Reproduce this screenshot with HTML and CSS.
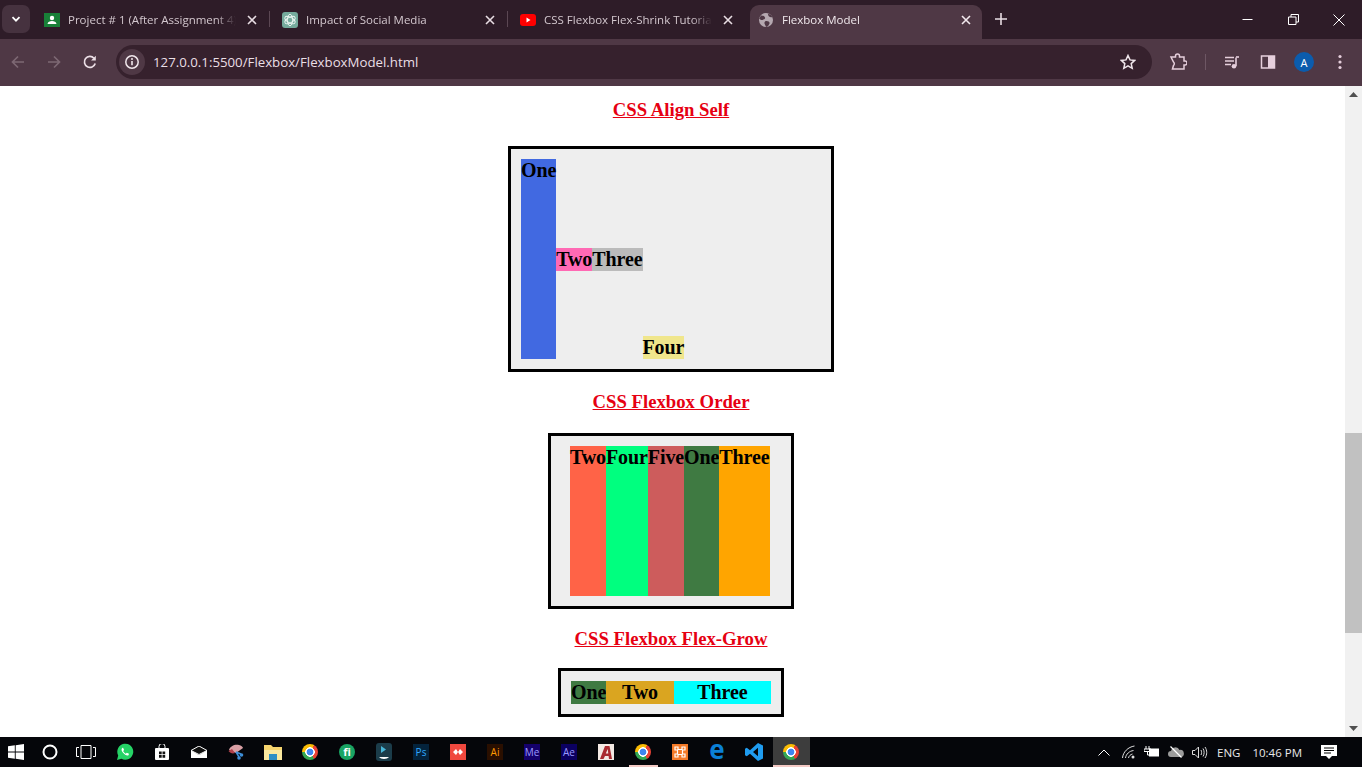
FILE: index.html
```html
<!DOCTYPE html>
<html lang="en">
<head>
<meta charset="utf-8">
<title>Flexbox Model</title>
<link rel="stylesheet" href="styles.css">
</head>
<body>
<div class="tabstrip">
  <div class="tab-search"><svg width="12" height="12" viewBox="0 0 12 12"><path d="M2.5 4.2 6 7.7l3.5-3.5" fill="none" stroke="#fff" stroke-width="1.8"/></svg></div>
  <div class="tab">
    <svg class="fav" width="16" height="16" viewBox="0 0 16 16"><rect y="1" width="16" height="14" fill="#188038"/><circle cx="8" cy="6" r="2.2" fill="#fff"/><path d="M3.5 12c.4-2.2 2.2-3 4.500-3s4.100.8 4.500 3z" fill="#fff"/></svg>
    <span class="tab-title">Project # 1 (After Assignment 4)</span>
    <svg class="tab-x" width="10" height="10" viewBox="0 0 10 10"><path d="M1 1l8 8M9 1 1 9" stroke="#e8dde3" stroke-width="1.600"/></svg>
    <i class="tab-sep"></i>
  </div>
  <div class="tab">
    <svg class="fav" width="16" height="16" viewBox="0 0 16 16"><rect width="16" height="16" rx="3" fill="#74aa9c"/><g fill="none" stroke="#eef7f4" stroke-width=".9"><ellipse cx="8" cy="8" rx="2.700" ry="5.700"/><ellipse cx="8" cy="8" rx="2.700" ry="5.700" transform="rotate(60 8 8)"/><ellipse cx="8" cy="8" rx="2.700" ry="5.700" transform="rotate(120 8 8)"/></g></svg>
    <span class="tab-title">Impact of Social Media</span>
    <svg class="tab-x" width="10" height="10" viewBox="0 0 10 10"><path d="M1 1l8 8M9 1 1 9" stroke="#e8dde3" stroke-width="1.600"/></svg>
    <i class="tab-sep"></i>
  </div>
  <div class="tab">
    <svg class="fav" width="16" height="16" viewBox="0 0 16 16"><rect y="2" width="16" height="12" rx="3" fill="#f00"/><path d="M6.500 5.500v5L10.500 8z" fill="#fff"/></svg>
    <span class="tab-title">CSS Flexbox Flex-Shrink Tutorial</span>
    <svg class="tab-x" width="10" height="10" viewBox="0 0 10 10"><path d="M1 1l8 8M9 1 1 9" stroke="#e8dde3" stroke-width="1.600"/></svg>
  </div>
  <div class="tab tab-active">
    <svg class="fav" width="16" height="16" viewBox="0 0 16 16"><circle cx="8" cy="8" r="7" fill="#b5a8b0"/><path d="M3 3.500c2 0 3.500.5 4 2s-1 2-2.500 2.500S2 7 1.200 6.500zM8.500 9c2 0 3.500 1 3 2.500S10 14.500 8 15c-.5-2-2-3-1.500-4.500S7.500 9 8.500 9zM10 1.500c0 1.500.5 3 2 3.500s2 0 2.800.5A7 7 0 0 0 10 1.500z" fill="#4f3845"/></svg>
    <span class="tab-title">Flexbox Model</span>
    <svg class="tab-x" width="10" height="10" viewBox="0 0 10 10"><path d="M1 1l8 8M9 1 1 9" stroke="#f3e9ee" stroke-width="1.600"/></svg>
  </div>
  <svg class="new-tab" width="12" height="12" viewBox="0 0 12 12"><path d="M6 0v12M0 6h12" stroke="#e8dde3" stroke-width="1.600"/></svg>
  <div class="win-controls">
    <span class="win-btn"><svg width="11" height="11" viewBox="0 0 11 11"><path d="M.5 5.500h10" stroke="#fff"/></svg></span>
    <span class="win-btn"><svg width="11" height="11" viewBox="0 0 11 11"><path d="M.5 3h7.500v7.500H.5zM3 3V.5h7.500V8H8" fill="none" stroke="#fff"/></svg></span>
    <span class="win-btn"><svg width="12" height="12" viewBox="0 0 12 12"><path d="M.5.500l11 11M11.500.5l-11 11" stroke="#fff"/></svg></span>
  </div>
</div>

<div class="toolbar">
  <span class="tool"><svg width="16" height="16" viewBox="0 0 16 16"><path d="M14 8H2.500M8 2.500 2.500 8 8 13.500" fill="none" stroke="#7d6873" stroke-width="1.700"/></svg></span>
  <span class="tool"><svg width="16" height="16" viewBox="0 0 16 16"><path d="M2 8h11.500M8 2.500 13.500 8 8 13.500" fill="none" stroke="#7d6873" stroke-width="1.700"/></svg></span>
  <span class="tool"><svg width="16" height="16" viewBox="0 0 16 16"><path d="M13.200 9.500A5.500 5.500 0 1 1 12 4.200" fill="none" stroke="#ecdfe6" stroke-width="1.700"/><path d="M13.800 1.800v4.700H9.100z" fill="#ecdfe6"/></svg></span>
  <div class="omnibox">
    <span class="site-info"><svg width="16" height="16" viewBox="0 0 16 16"><circle cx="8" cy="8" r="6.200" fill="none" stroke="#f0e6eb" stroke-width="1.500"/><path d="M8 7v4.300" stroke="#f0e6eb" stroke-width="1.600"/><circle cx="8" cy="5" r="1" fill="#f0e6eb"/></svg></span>
    <span class="url">127.0.0.1:5500/Flexbox/FlexboxModel.html</span>
    <svg class="star" width="16" height="16" viewBox="0 0 16 16"><path d="M8 1.500l2 4.400 4.700.5-3.500 3.200 1 4.700L8 11.900l-4.200 2.400 1-4.700-3.500-3.200 4.700-.5z" fill="none" stroke="#f0e6eb" stroke-width="1.500"/></svg>
  </div>
  <span class="tool"><svg width="18" height="18" viewBox="0 0 18 18"><path d="M2 4h4.500V3a2 2 0 0 1 4 0v1H15v4h1a2 2 0 0 1 0 4h-1v4H3.500l1-3.500a2.300 2.300 0 0 0 0-3.500z" fill="none" stroke="#e6cfdc" stroke-width="1.500"/></svg></span>
  <i class="tool-sep"></i>
  <span class="tool"><svg width="16" height="16" viewBox="0 0 16 16"><path d="M1 3.500h9M1 7h9M1 10.500h6" stroke="#e6cfdc" stroke-width="1.500"/><path d="M12 3.500V12" stroke="#e6cfdc" stroke-width="1.600"/><path d="M12 3h3" stroke="#e6cfdc" stroke-width="1.600"/><circle cx="10" cy="12.300" r="2.300" fill="#e6cfdc"/></svg></span>
  <span class="tool"><svg width="16" height="16" viewBox="0 0 16 16"><rect x="1.500" y="2" width="13" height="12" fill="#4f3845" stroke="#e6cfdc" stroke-width="1.500"/><rect x="8" y="2" width="7" height="12" fill="#e6cfdc"/></svg></span>
  <span class="tool"><span class="avatar">A</span></span>
  <span class="tool"><svg width="4" height="16" viewBox="0 0 4 16"><circle cx="2" cy="2.500" r="1.600" fill="#e6cfdc"/><circle cx="2" cy="8" r="1.600" fill="#e6cfdc"/><circle cx="2" cy="13.500" r="1.600" fill="#e6cfdc"/></svg></span>
</div>

<div class="viewport">
  <main class="page">
    <h3 class="heading heading-first">CSS Align Self</h3>
    <div class="flexbox box-align">
      <div class="item royal self-stretch">One</div>
      <div class="item pink self-center">Two</div>
      <div class="item silver self-center">Three</div>
      <div class="item khaki self-end">Four</div>
    </div>
    <h3 class="heading">CSS Flexbox Order</h3>
    <div class="flexbox box-order">
      <div class="item tomato">Two</div>
      <div class="item spring">Four</div>
      <div class="item indian">Five</div>
      <div class="item green">One</div>
      <div class="item orange">Three</div>
    </div>
    <h3 class="heading heading-grow">CSS Flexbox Flex-Grow</h3>
    <div class="flexbox box-grow">
      <div class="item green">One</div>
      <div class="item gold grow-2">Two</div>
      <div class="item cyan grow-3">Three</div>
    </div>
  </main>
  <aside class="scrollbar">
    <span class="sb-btn"><svg width="9" height="5" viewBox="0 0 9 5"><path d="M4.500 0 9 5H0z" fill="#505050"/></svg></span>
    <div class="sb-track"><div class="sb-thumb"></div></div>
    <span class="sb-btn"><svg width="9" height="5" viewBox="0 0 9 5"><path d="M0 0h9L4.500 5z" fill="#505050"/></svg></span>
  </aside>
</div>

<footer class="taskbar">
  <span class="tb-start"><svg width="16" height="16" viewBox="0 0 16 16"><path d="M0 2.300 6.800 1.300v6.200H0zM7.700 1.200 16 0v7.500H7.700zM0 8.400h6.800v6.300L0 13.700zM7.700 8.400H16V16l-8.300-1.200z" fill="#fff"/></svg></span>
  <span class="tb-item"><svg width="16" height="16" viewBox="0 0 16 16"><circle cx="8" cy="8" r="6.500" fill="none" stroke="#fff" stroke-width="2"/></svg></span>
  <span class="tb-item tb-taskview"><svg width="20" height="14" viewBox="0 0 20 14"><path d="M5 .5h10v13H5z" fill="none" stroke="#fff"/><path d="M3 2.500H.5v9H3M17 2.500h2.500v9H17" fill="none" stroke="#fff"/></svg></span>
  <span class="tb-item"><svg width="18" height="18" viewBox="0 0 18 18"><path d="M1 17l1.200-4.500A8 8 0 1 1 5.500 15.800z" fill="#25d366"/><path d="M6.500 4.800c-1.500 1-1.200 3 .5 5s4 3.500 5.500 2.500l.5-1.500-2.200-1-1 1c-1-.4-2.200-1.600-2.700-2.700l1-1-1-2.300z" fill="#fff"/></svg></span>
  <span class="tb-item"><svg width="14" height="16" viewBox="0 0 14 16"><path d="M4 4V2.500a3 3 0 0 1 6 0V4" fill="none" stroke="#fff"/><rect y="4" width="14" height="12" rx="1" fill="#fff"/><path d="M4 7.500h2.700v2.800H4zM7.500 7.500h2.700v2.800H7.500zM4 11h2.700v2.800H4zM7.500 11h2.700v2.800H7.500z" fill="#111"/></svg></span>
  <span class="tb-item"><svg width="16" height="12" viewBox="0 0 16 12"><path d="M0 4.500 8 0l8 4.500L8 8.500z" fill="#111" stroke="#fff"/><path d="M0 4.500 8 9l8-4.500V12H0z" fill="#fff"/></svg></span>
  <span class="tb-item"><svg width="18" height="16" viewBox="0 0 18 16"><path d="M2 6C3 2 8 0 12 1c2 .5 4 2 4 3l-7 5z" fill="#d9a0a5"/><path d="M1.500 7c1.500 2 4 3 6.500 2L5 5z" fill="#b3404a"/><path d="M9 8l5 2M9 8l3 5" stroke="#3d8ed8" stroke-width="1.500"/><circle cx="14.500" cy="11" r="1.800" fill="#3d8ed8"/><circle cx="12" cy="14" r="1.800" fill="#3d8ed8"/></svg></span>
  <span class="tb-item"><svg width="18" height="16" viewBox="0 0 18 16"><path d="M0 1h7l2 2h9v13H0z" fill="#f6d56f"/><path d="M0 6h18v10H0z" fill="#fbe9a0"/><rect x="5" y="10" width="8" height="6" fill="#2f8fc4"/></svg></span>
  <span class="tb-item"><i class="chrome"></i></span>
  <span class="tb-item"><span class="round-badge">fi</span></span>
  <span class="tb-item"><svg width="16" height="18" viewBox="0 0 16 18"><rect width="16" height="18" rx="3" fill="#1b3c4a"/><path d="M3 14c2 2.500 8 2.500 10 0z" fill="#fff"/><path d="M5 3l5 3.500L5 10z" fill="#47b6d8"/></svg></span>
  <span class="tb-item"><span class="app app-ps">Ps</span></span>
  <span class="tb-item"><span class="app app-red"><svg width="10" height="6" viewBox="0 0 10 6"><path d="M0 3l3-3 2 3-2 3zM5 3l2-3 3 3-3 3z" fill="#fff"/></svg></span></span>
  <span class="tb-item"><span class="app app-ai">Ai</span></span>
  <span class="tb-item"><span class="app app-me">Me</span></span>
  <span class="tb-item"><span class="app app-ae">Ae</span></span>
  <span class="tb-item"><span class="app app-acad"><svg width="14" height="14" viewBox="0 0 14 14"><path d="M1 14 6 1h4.500l2.500 13h-3l-.4-3H6l-1.500 3zM6.800 8.500h2.500L8.700 4z" fill="#a92a30"/></svg></span></span>
  <span class="tb-item tb-underlined"><i class="chrome"></i></span>
  <span class="tb-item"><span class="app app-xampp"><svg width="12" height="12" viewBox="0 0 12 12"><path d="M1 1h3v2.500h4V1h3v3H8.500v4H11v3H8V8.500H4V11H1V8h2.500V4H1z" fill="none" stroke="#fff" stroke-width="1.200"/></svg></span></span>
  <span class="tb-item"><span class="edge">e</span></span>
  <span class="tb-item"><svg width="18" height="18" viewBox="0 0 18 18"><path d="M13 0l5 2.400v13.200L13 18 5 10.700 1.800 13.200 0 12.300V5.700l1.800-.9L5 7.300zM13 4.800 8 9l5 4.200z" fill="#1f9cf0"/></svg></span>
  <span class="tb-item tb-active"><i class="chrome"></i></span>
  <div class="tray">
    <svg class="tr-caret" width="12" height="7" viewBox="0 0 12 7"><path d="M.5 6.500 6 1l5.500 5.500" fill="none" stroke="#fff"/></svg>
    <svg class="tr-wifi" width="14" height="14" viewBox="0 0 14 14"><path d="M.5 13C1 7 6 2 12.500 1M3.500 13c.5-4 4-7 8-7.500M6.500 13c.3-2 2-3.500 4-4" fill="none" stroke="#ddd"/><circle cx="11" cy="12" r="1.500" fill="#ddd"/></svg>
    <svg class="tr-batt" width="16" height="12" viewBox="0 0 16 12"><path d="M2 0v3M5 0v3M0 3h7v2.500H0zM3.500 5.500V9H5" fill="none" stroke="#fff"/><rect x="5" y="2.500" width="10" height="8" fill="#fff"/></svg>
    <svg class="tr-cloud" width="16" height="12" viewBox="0 0 16 12"><path d="M3 11a3 3 0 0 1 0-6 4.500 4.500 0 0 1 8.500-1A3.500 3.500 0 0 1 13 11z" fill="#9c9c9c"/><path d="M2.500.5l11 11" stroke="#fff" stroke-width="1.200"/></svg>
    <svg class="tr-vol" width="16" height="13" viewBox="0 0 16 13"><path d="M.5 4.500h2.500L6.500 1v11L3 8.500H.5zM9 4c.8 1.500.8 3.500 0 5M11 2.500c1.500 2.500 1.500 5.500 0 8M13 1c2.300 3.500 2.300 7.500 0 11" fill="none" stroke="#ddd"/></svg>
    <span class="tr-lang">ENG</span>
    <span class="tr-time">10:46 PM</span>
    <svg class="tr-note" width="16" height="16" viewBox="0 0 16 16"><path d="M0 1h16v11h-5l-3 3-3-3H0z" fill="#fff"/><path d="M3 4h10M3 6.500h10M3 9h7" stroke="#000"/></svg>
  </div>
</footer>
</body>
</html>
```

FILE: styles.css
```css
* { box-sizing: border-box; }

html, body { height: 100%; }

body {
  margin: 0;
  display: flex;
  flex-direction: column;
  height: 767px;
  overflow: hidden;
  background: #fff;
  font-family: "Liberation Serif", serif;
}

svg { display: block; flex: none; }

/* Browser tab strip */
.tabstrip {
  display: flex;
  align-items: flex-end;
  height: 39px;
  flex: none;
  background: #2e1c28;
  font-family: "Open Sans", "Noto Sans", sans-serif;
}

.tab-search {
  width: 28px;
  height: 28px;
  margin: 0 2px 6px 2px;
  border-radius: 7px;
  background: #46323f;
  display: flex;
  align-items: center;
  justify-content: center;
}

.tab {
  position: relative;
  width: 238px;
  height: 34px;
  display: flex;
  align-items: center;
  padding: 0 0 5px 12px;
  flex: none;
  color: #d3c7ce;
}

.tab-active {
  width: 232px;
  margin-left: 4px;
  padding-left: 8px;
  background: #4f3845;
  border-radius: 9px 9px 0 0;
  color: #f0e8ec;
}

.fav { margin-right: 8px; }

.tab-title {
  width: 168px;
  font-size: 11.5px;
  white-space: nowrap;
  overflow: hidden;
  -webkit-mask-image: linear-gradient(to right, #000 88%, transparent);
  mask-image: linear-gradient(to right, #000 88%, transparent);
}

.tab-x { margin-left: 11px; }

.tab-sep {
  position: absolute;
  right: 0;
  top: 6px;
  width: 1px;
  height: 16px;
  background: #5b4753;
}

.new-tab { margin: 0 0 14px 13px; }

.win-controls {
  display: flex;
  margin-left: auto;
  height: 39px;
}

.win-btn {
  width: 46px;
  display: flex;
  align-items: center;
  justify-content: center;
}

/* Browser toolbar */
.toolbar {
  display: flex;
  align-items: center;
  height: 47px;
  flex: none;
  background: #4f3845;
  padding: 0 4px 1px 0;
}

.tool {
  width: 36px;
  height: 36px;
  flex: none;
  display: flex;
  align-items: center;
  justify-content: center;
}

.omnibox {
  width: 1036px;
  height: 34px;
  margin: 0 8px;
  flex: none;
  display: flex;
  align-items: center;
  border-radius: 17px;
  background: #36212d;
  padding: 0 16px 0 3px;
}

.site-info {
  width: 26px;
  height: 26px;
  border-radius: 50%;
  background: #4f3845;
  display: flex;
  align-items: center;
  justify-content: center;
}

.url {
  margin-left: 8px;
  font-family: "Open Sans", "Noto Sans", sans-serif;
  font-size: 13.25px;
  color: #eadfe5;
  white-space: nowrap;
}

.star { margin-left: auto; }

.tool-sep {
  width: 1px;
  height: 16px;
  background: #6e5764;
  margin: 0 8px 0 9px;
  flex: none;
}

.avatar {
  width: 20px;
  height: 20px;
  border-radius: 50%;
  background: #0b5cad;
  color: #fff;
  font: 11px "Open Sans", sans-serif;
  display: flex;
  align-items: center;
  justify-content: center;
}

/* Page viewport */
.viewport {
  display: flex;
  flex: 1;
  min-height: 0;
}

.page {
  flex: 1;
  min-width: 0;
  overflow: hidden;
  padding-right: 3px;
  background: #fff;
}

.heading {
  margin: 19px 0 21px;
  font-size: 18.72px;
  line-height: 21px;
  color: #e60012;
  text-align: center;
  text-decoration: underline;
}

.heading-first { margin: 13px 0 26px; }
.heading-grow { margin: 19px 0 19px; }

.flexbox {
  display: flex;
  margin: 0 auto;
  border: 3px solid #000;
  padding: 10px;
  background: #eee;
  font-size: 20px;
  font-weight: bold;
  letter-spacing: -0.1px;
  color: #000;
}

.box-align { width: 326px; height: 226px; }
.box-order { width: 246px; height: 176px; padding: 10px 19px; }
.box-grow { width: 226px; height: 49px; }

.item { flex: none; text-align: center; }

.self-stretch { align-self: stretch; }
.self-center { align-self: center; }
.self-end { align-self: flex-end; }

.grow-2 { flex: 2 0 auto; }
.grow-3 { flex: 3 0 auto; }

.royal { background: #4169e1; }
.pink { background: #ff69b4; }
.silver { background: #bbb; }
.khaki { background: #f0e68c; }
.tomato { background: #ff6347; }
.spring { background: #00ff7f; }
.indian { background: #cd5c5c; }
.green { background: #3f7a42; }
.orange { background: #ffa500; }
.gold { background: #daa520; }
.cyan { background: #0ff; }

/* Scrollbar */
.scrollbar {
  width: 17px;
  flex: none;
  display: flex;
  flex-direction: column;
  background: #f1f1f1;
}

.sb-btn {
  height: 17px;
  flex: none;
  display: flex;
  align-items: center;
  justify-content: center;
}

.sb-track { flex: 1; min-height: 0; }

.sb-thumb {
  height: 200px;
  margin-top: 330px;
  background: #c1c1c1;
}

/* Windows taskbar */
.taskbar {
  display: flex;
  align-items: center;
  height: 30px;
  flex: none;
  background: #05060a;
}

.tb-start {
  width: 31.5px;
  display: flex;
  justify-content: center;
  flex: none;
}

.tb-item {
  position: relative;
  width: 37px;
  height: 30px;
  flex: none;
  display: flex;
  align-items: center;
  justify-content: center;
}

.tb-taskview { width: 35px; margin-right: 3px; }

.tb-underlined::after,
.tb-active::after {
  content: "";
  position: absolute;
  left: 4px;
  right: 4px;
  bottom: 0;
  height: 2px;
  background: #f3c9c4;
}

.tb-active { background: #3d3d3d; }
.tb-active::after { left: 0; right: 0; }

.chrome {
  display: block;
  width: 16px;
  height: 16px;
  border-radius: 50%;
  background:
    radial-gradient(circle, #3f86f0 0 3.3px, #fff 3.6px 4.6px, transparent 4.9px),
    conic-gradient(from 30deg, #e94235 0 120deg, #34a853 120deg 240deg, #fbbc04 240deg);
}

.round-badge {
  width: 16px;
  height: 16px;
  border-radius: 50%;
  background: #19a463;
  color: #fff;
  font: bold 11px/15px "Open Sans", sans-serif;
  text-align: center;
}

.app {
  width: 16px;
  height: 16px;
  display: flex;
  align-items: center;
  justify-content: center;
  font: 10px "Open Sans", sans-serif;
}

.app-ps { background: #04233c; color: #31a8ff; }
.app-red { background: #f0483e; }
.app-ai { background: #2a0f00; color: #ff9a00; }
.app-me { background: #14006b; color: #9a9aff; }
.app-ae { background: #0b0060; color: #9999ff; }
.app-acad { background: #f3e9e4; }
.app-xampp { background: #f37a28; }

.edge {
  font: bold 26px/26px "Open Sans", sans-serif;
  color: #0a7fd6;
  margin-top: -6px;
}

.tray {
  margin-left: auto;
  height: 30px;
  display: flex;
  align-items: center;
  color: #e8e8e8;
  font: 11.5px "Open Sans", sans-serif;
  padding-right: 25px;
}

.tr-caret { margin-right: 12px; }
.tr-wifi { margin-right: 8px; }
.tr-batt { margin-right: 8px; }
.tr-cloud { margin-right: 8px; }
.tr-vol { margin-right: 9px; }
.tr-lang { margin-right: 12px; }
.tr-time { margin-right: 19px; }
```
